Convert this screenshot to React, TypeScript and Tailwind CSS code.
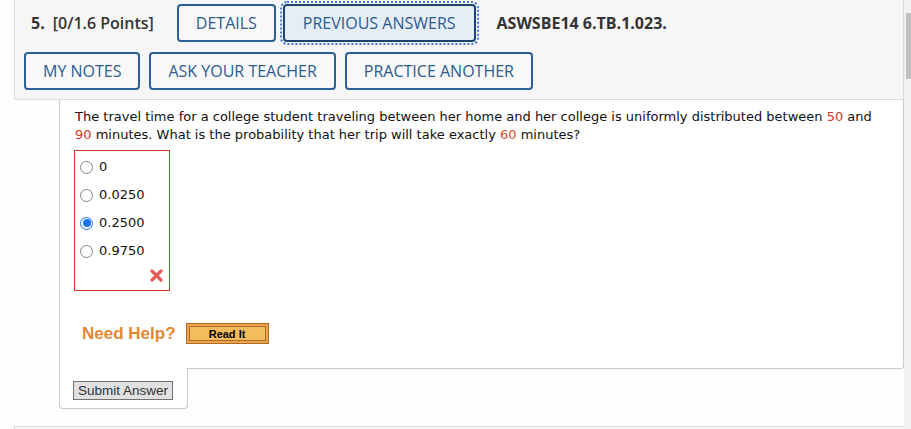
import React from 'react'

const btn =
  "h-[38px] rounded-[4px] border-2 border-[#2d5f94] bg-[#f8f8f8] px-[17px] text-[16px] leading-none text-[#2d5b8e] uppercase"

function RedX() {
  return (
    <svg width="13" height="13" viewBox="0 0 13 13">
      <path d="M2 2 L11 11 M11 2 L2 11" stroke="#e25b5b" strokeWidth="3.2" strokeLinecap="round" />
    </svg>
  )
}

function Radio({ checked }: { checked?: boolean }) {
  if (checked) {
    return (
      <span className="flex h-[13px] w-[13px] items-center justify-center rounded-full border border-[#1a73e8] bg-white">
        <span className="h-[8px] w-[8px] rounded-full bg-[#1a73e8]" />
      </span>
    )
  }
  return <span className="h-[13px] w-[13px] rounded-full border border-[#858585] bg-white" />
}

function Question() {
  const num = "text-[#cf3a2c]"
  return (
    <p className="text-[13px] leading-[18px] text-[#111] font-['DejaVu_Sans',Verdana,sans-serif]">
      The travel time for a college student traveling between her home and her college is uniformly distributed between{' '}
      <span className={num}>50</span> and <span className={num}>90</span> minutes. What is the probability that her trip
      will take exactly <span className="text-[#d4502a]">60</span> minutes?
    </p>
  )
}

const options = ['0', '0.0250', '0.2500', '0.9750']

export default function App() {
  return (
    <div className="flex h-[429px] w-[911px] overflow-hidden bg-[#fefefe] font-['Open_Sans',sans-serif]">
      <div className="w-[904px] shrink-0">
        {/* header panel */}
        <div className="ml-[14px] flex flex-col gap-[10px] border-r border-b border-l border-[#dcdcdc] bg-[#f6f6f6] pt-[4px] pb-[9px]">
          <div className="flex items-center">
            <span className="ml-[16px] text-[16px] font-bold text-[#333]">5.</span>
            <span className="ml-[8px] text-[16px] font-semibold text-[#333]">[0/1.6 Points]</span>
            <button className={`${btn} ml-[23px]`}>Details</button>
            <button className="ml-[7px] h-[38px] rounded-[4px] border-2 border-[#1e4470] bg-[#e5edf6] px-[18px] text-[16px] leading-none text-[#2d5b8e] uppercase outline-2 outline-offset-1 outline-dotted outline-[#3a7bde]">
              Previous Answers
            </button>
            <span className="ml-[21px] text-[16px] font-bold text-[#333]">ASWSBE14 6.TB.1.023.</span>
          </div>
          <div className="ml-[9px] flex gap-[9px]">
            <button className={btn}>My Notes</button>
            <button className={btn}>Ask Your Teacher</button>
            <button className={btn}>Practice Another</button>
          </div>
        </div>

        {/* question body */}
        <div className="ml-[59px]">
          <div className="h-[269px] rounded-br-[3px] border-r border-b border-l border-[#cbcbcb] bg-white pt-[8px] pr-[20px] pl-[15px]">
            <Question />
            <div className="mt-[6px] -ml-px flex h-[141px] w-[96px] flex-col border border-[#cc3a2e] pt-[2px] pl-[5px]">
              {options.map((o, i) => (
                <div key={o} className="flex h-[28px] items-center gap-[6px] text-[13px] text-[#111] font-['DejaVu_Sans',Verdana,sans-serif]">
                  <Radio checked={i === 2} />
                  {o}
                </div>
              ))}
              <div className="mt-[4px] flex justify-end pr-[6px]">
                <RedX />
              </div>
            </div>
            <div className="mt-[30px] flex items-center pl-[7px]">
              <span className="text-[17px] font-bold text-[#e3882f] font-['Liberation_Sans',Arial,sans-serif]">Need Help?</span>
              <button className="ml-[10px] flex h-[21px] w-[83px] items-center justify-center border border-[#b0692a] bg-[#eea54a] p-[2px]">
                <span className="flex h-full w-full items-center justify-center border border-[#a86a30] bg-[#f4bd5c] text-[11px] font-bold text-black font-['Liberation_Sans',Arial,sans-serif]">
                  Read It
                </span>
              </button>
            </div>
          </div>
          <div className="-mt-px h-[41px] w-[129px] rounded-b-[4px] border-r border-b border-l border-[#cbcbcb] bg-white pt-[9px] pl-[13px]">
            <button className="h-[19px] w-[100px] border border-[#707070] bg-[#e1e1e1] text-[13.5px] leading-none text-[#333] font-['Liberation_Sans',Arial,sans-serif]">
              Submit Answer
            </button>
          </div>
        </div>

        {/* next panel */}
        <div className="mt-[17px] ml-[14px] h-[10px] border-t border-l border-[#dedede] bg-[#f6f6f6]" />
      </div>

      {/* scrollbar */}
      <div className="flex w-[7px] shrink-0 bg-[#f1f1f1] pt-[13px] pl-[2px]">
        <div className="h-[66px] w-[5px] bg-[#c1c1c1]" />
      </div>
    </div>
  )
}
